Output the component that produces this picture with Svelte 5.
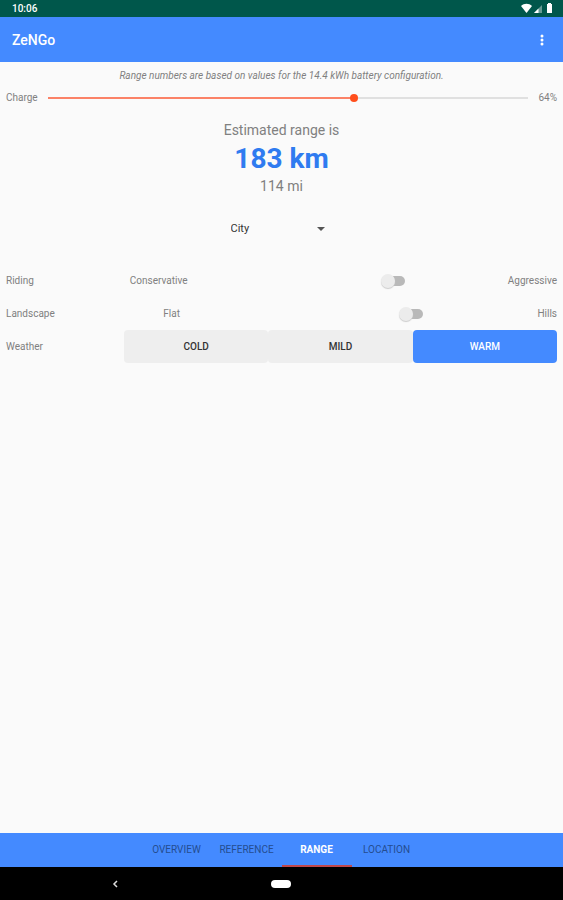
<script lang="ts">
	let charge = $state(64);
	let terrain = $state('City');
	let weather = $state('Warm');
	let tab = $state('Range');

	let switches = $state([
		{ id: 'riding', label: 'Riding', from: 'Conservative', to: 'Aggressive', on: false },
		{ id: 'landscape', label: 'Landscape', from: 'Flat', to: 'Hills', on: false }
	]);

	const weathers = ['Cold', 'Mild', 'Warm'];
	const tabs = ['Overview', 'Reference', 'Range', 'Location'];
</script>

<div class="screen">
	<div class="status">
		<span>10:06</span>
		<svg width="34" height="11" viewBox="0 0 34 11" aria-hidden="true">
			<path d="M1 3 C4 0 9 0 12 3 L6.500 10 Z" fill="#fff" />
			<path d="M22 2 V10 H14 Z" fill="#fff" opacity=".4" />
			<path d="M18.500 5.500 V10 H14 Z" fill="#fff" />
			<path d="M27 1 H28 V0 H31 V1 H32 V10 H27 Z" fill="#fff" />
		</svg>
	</div>

	<header>
		<h1>ZeNGo</h1>
		<button class="more" aria-label="More options">
			<svg width="4" height="12" viewBox="0 0 4 12">
				<circle cx="2" cy="2" r="1.5" fill="#fff" />
				<circle cx="2" cy="6" r="1.5" fill="#fff" />
				<circle cx="2" cy="10" r="1.5" fill="#fff" />
			</svg>
		</button>
	</header>

	<main>
		<p class="note">Range numbers are based on values for the 14.4 kWh battery configuration.</p>

		<div class="charge">
			<label for="charge">Charge</label>
			<input id="charge" type="range" min="0" max="100" bind:value={charge} style="--value: {charge}%" />
			<output for="charge">{charge}%</output>
		</div>

		<section class="estimate">
			<p>Estimated range is</p>
			<strong>183 km</strong>
			<p>114 mi</p>
		</section>

		<div class="terrain">
			<select bind:value={terrain} aria-label="Terrain">
				<option>City</option>
				<option>Highway</option>
			</select>
			<svg width="8" height="4" viewBox="0 0 8 4" aria-hidden="true">
				<path d="M0 0 H8 L4 4 Z" fill="#555" />
			</svg>
		</div>

		{#each switches as s}
			<div class="row">
				<label for={s.id}>{s.label}</label>
				<div class="choice {s.id}">
					<span class="from">{s.from}</span>
					<input id={s.id} type="checkbox" role="switch" bind:checked={s.on} />
					<span class="to">{s.to}</span>
				</div>
			</div>
		{/each}

		<div class="row">
			<span id="weather">Weather</span>
			<div class="weather" role="group" aria-labelledby="weather">
				{#each weathers as w}
					<button class:active={weather === w} aria-pressed={weather === w} onclick={() => (weather = w)}>{w}</button>
				{/each}
			</div>
		</div>
	</main>

	<nav class="tabs">
		{#each tabs as t}
			<button class:active={tab === t} onclick={() => (tab = t)}>{t}</button>
		{/each}
	</nav>

	<div class="system">
		<button aria-label="Back">
			<svg width="6" height="8" viewBox="0 0 6 8">
				<path d="M5 1 L2 4 L5 7" fill="none" stroke="#ddd" stroke-width="1.5" />
			</svg>
		</button>
		<button class="home" aria-label="Home"></button>
	</div>
</div>

<style>
	:global(body) {
		margin: 0;
		background: #fafafa;
	}
	.screen {
		display: flex;
		flex-direction: column;
		min-height: 100vh;
		font-family: Roboto, sans-serif;
		font-size: 10px;
		line-height: 12px;
		color: #808080;
	}
	button {
		margin: 0;
		padding: 0;
		border: 0;
		background: none;
		font: inherit;
		color: inherit;
		cursor: pointer;
	}
	p {
		margin: 0;
	}
	svg {
		display: block;
	}

	.status {
		display: flex;
		justify-content: space-between;
		align-items: center;
		height: 17px;
		padding: 0 9px 0 12px;
		background: #00574b;
		color: #fff;
		font-weight: 500;
	}
	header {
		display: flex;
		justify-content: space-between;
		align-items: center;
		height: 45px;
		padding: 0 12px;
		background: #448aff;
		color: #fff;
	}
	h1 {
		margin: 0;
		font-size: 14px;
		line-height: 16px;
		font-weight: 500;
	}
	.more {
		display: flex;
		justify-content: center;
		width: 18px;
	}

	main {
		flex: 1;
		padding: 8px 6px;
	}
	.note {
		text-align: center;
		font-style: italic;
	}
	.charge {
		display: flex;
		align-items: center;
		height: 16px;
		margin-top: 8px;
	}
	.charge label {
		width: 42px;
	}
	.charge input {
		flex: 1;
		min-width: 0;
		height: 16px;
		margin: 0;
		appearance: none;
		background: none;
	}
	.charge input::-webkit-slider-runnable-track {
		height: 2px;
		background: linear-gradient(to right, #fb8267 var(--value), #e0e0e0 var(--value));
	}
	.charge input::-webkit-slider-thumb {
		appearance: none;
		width: 8px;
		height: 8px;
		margin-top: -3px;
		border-radius: 50%;
		background: #ff4e1c;
	}
	.charge output {
		width: 29px;
		text-align: right;
	}

	.estimate {
		margin-top: 16px;
		text-align: center;
		font-size: 14px;
		line-height: 16px;
	}
	.estimate strong {
		display: block;
		margin: 5px 0 3px;
		font-size: 28px;
		line-height: 32px;
		color: #2f7bf0;
	}

	.terrain {
		display: flex;
		align-items: center;
		justify-content: center;
		height: 24px;
		margin: 23px 0;
		padding-right: 8px;
	}
	.terrain select {
		width: 102px;
		height: 24px;
		margin-right: -16px;
		padding: 0 16px 0 0;
		border: 0;
		appearance: none;
		background: none;
		font: inherit;
		font-size: 11px;
		color: #333;
	}
	.terrain svg {
		pointer-events: none;
	}

	.row {
		display: flex;
		align-items: center;
		min-height: 33px;
	}
	.row > :first-child {
		width: 118px;
	}
	.choice {
		flex: 1;
		display: grid;
		align-items: center;
	}
	.riding {
		grid-template-columns: 16fr 49fr 35fr;
	}
	.landscape {
		grid-template-columns: 22fr 47fr 31fr;
	}
	.from {
		text-align: center;
	}
	.to {
		text-align: right;
	}
	.choice input {
		justify-self: end;
		display: flex;
		align-items: center;
		width: 22px;
		height: 10px;
		margin: 0;
		appearance: none;
		border-radius: 5px;
		background: #b9b9b9;
	}
	.choice input::before {
		content: '';
		width: 14px;
		height: 14px;
		margin-left: -2px;
		border-radius: 50%;
		background: #ececec;
		box-shadow: 0 1px 1px #ccc;
	}
	.choice input:checked {
		justify-content: flex-end;
		background: #ffab91;
	}

	.weather {
		flex: 1;
		display: flex;
	}
	.weather button {
		flex: 1;
		height: 33px;
		border-radius: 4px;
		background: #eee;
		color: #333;
		font-weight: 500;
		text-transform: uppercase;
	}
	.weather .active {
		background: #448aff;
		color: #fff;
	}

	.tabs {
		display: flex;
		justify-content: center;
		height: 34px;
		background: #448aff;
	}
	.tabs button {
		width: 70px;
		border-top: 2px solid transparent;
		border-bottom: 2px solid transparent;
		color: #254d90;
		text-transform: uppercase;
	}
	.tabs .active {
		border-bottom-color: #c0484b;
		color: #fff;
		font-weight: 700;
	}

	.system {
		display: grid;
		grid-template-columns: 41fr 18fr 41fr;
		place-items: center;
		height: 33px;
		background: #000;
	}
	.home {
		width: 20px;
		height: 8px;
		border-radius: 4px;
		background: #fff;
	}
</style>
